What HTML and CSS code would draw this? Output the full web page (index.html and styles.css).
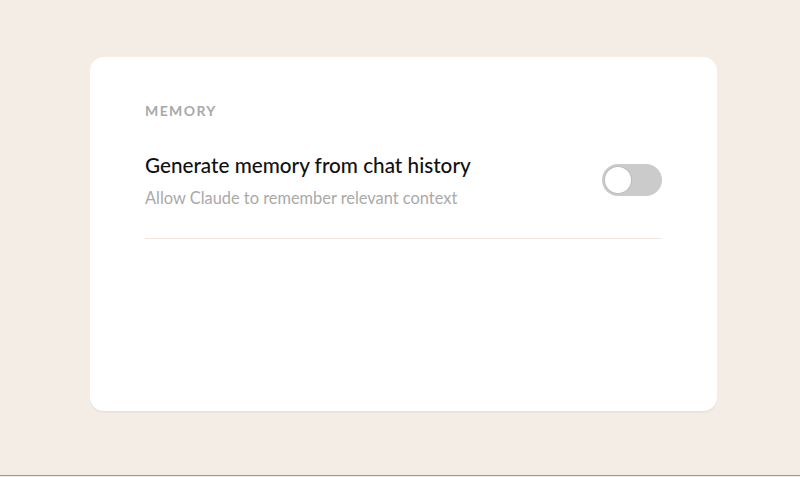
FILE: index.html
```html
<!DOCTYPE html>
<html lang="en">
<head>
	<meta charset="UTF-8">
	<title>Memory settings</title>
	<link rel="stylesheet" href="styles.css">
</head>
<body>
	<div class="page">
		<div class="card">
			<div class="label">MEMORY</div>
			<div class="row">
				<div class="text">
					<div class="title">Generate memory from chat history</div>
					<div class="desc">Allow Claude to remember relevant context</div>
				</div>
				<div class="toggle"><span class="knob"></span></div>
			</div>
		</div>
	</div>
</body>
</html>
```

FILE: styles.css
```css
*{
	margin: 0;
	padding: 0;
	box-sizing: border-box;
}
html, body{
	height: 477px;
	overflow: hidden;
}
body{
	background-color: #f3ede6;
	font-family: "Lato", "Noto Sans", sans-serif;
}
.page{
	height: 476px;
	border-bottom: 1px solid #9a9893;
	padding: 57px 0 0 90px;
}
.card{
	width: 627px;
	height: 354px;
	background: #fff;
	border-radius: 14px;
	box-shadow: 0 2px 0 #ebe4dc;
	padding: 45px 55px 0 55px;
}
.label{
	font-size: 14px;
	font-weight: 700;
	letter-spacing: 1.4px;
	color: #a9a9a9;
	line-height: 18px;
}
.row{
	margin-top: 32px;
	display: flex;
	align-items: center;
	justify-content: space-between;
	padding-bottom: 30px;
	border-bottom: 1px solid #efe7de;
}
.title{
	font-size: 20.7px;
	font-weight: 500;
	color: #111;
	line-height: 26px;
}
.desc{
	margin-top: 10px;
	font-size: 16.4px;
	color: #a9a9a9;
	line-height: 20px;
}
.toggle{
	width: 60px;
	height: 32px;
	border-radius: 16px;
	background: #cbcbcb;
	padding: 3px;
}
.knob{
	display: block;
	width: 26px;
	height: 26px;
	border-radius: 50%;
	background: #fff;
	box-shadow: 0 0 0 1px #bdbdbd;
}
```
